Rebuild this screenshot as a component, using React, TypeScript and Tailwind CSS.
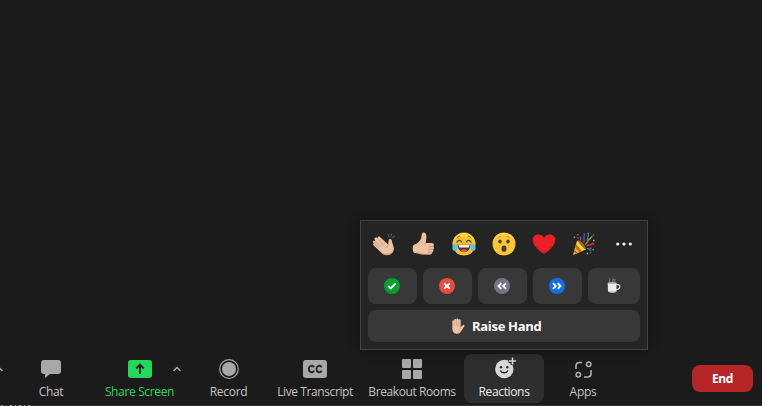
import React from "react";

const Clap = () => (
  <svg width="24" height="24" viewBox="0 0 24 24" fill="none">
    <path d="M.8 9.600C1.400 8.300 2.800 8.700 3.600 9.500L2.800 8C1.800 6.300 3.700 4.800 5.100 6.100L6 7C4.700 5.300 6.500 3.600 8 5l8.200 7.600.4-4.100c.2-1.900 2.500-2 3-.3l1.900 6.300c1 3.300.1 5.800-2.500 7.500-3 1.900-6.300 1.500-8.900-.6L1.500 13.200c-.9-.8-.4-2 .7-1.700L1.400 10.700c-.5-.4-.7-.7-.6-1.100z" fill="#edc2a0" />
    <path d="m2.200 11.500 5 4.700M3.600 9.500l5.600 5.200M6 7l5.500 6M16.200 12.600c-1 .9-1.300 2.100-1 3.400" stroke="#bf9073" strokeWidth=".7" />
    <path d="M9 20.300c3 2.800 7.300 2.700 10.300.5" stroke="#bf9073" strokeWidth=".8" />
    <path d="m15.800 2 1.300 2.900M19.500 1.700l-.5 2.600M22.500 4.300l-2.300 1.200" stroke="#4c6978" strokeWidth="1" strokeLinecap="round" />
  </svg>
);

const Thumb = () => (
  <svg width="24" height="24" viewBox="0 0 24 24" fill="none">
    <path d="M2.500 12.400c3.400-1 5.300-3.300 6.500-5.700.8-1.700.2-4.600 1.500-5.800 1.200-1 3.100-.1 3.600 1.700.6 2.300.1 4.900-.3 8.400h6c2 0 2.900 2.200 1.400 3.300 1.200.8 1 2.400-.2 3 .8 1 .5 2.300-.8 2.700.3 1.400-.5 2.400-2 2.400h-7.500c-3 0-4.700-1.300-8-1.500-2.300-.1-3-8-.2-8.500z" fill="#edc2a0" />
    <path d="M21 14.400h-4.300M20.700 17.400h-4.300M20 20.100h-3.800M13.800 11l-1 1.300M5 20.900c3 .7 4.500 1.500 7 1.500h6" stroke="#b98566" strokeWidth=".8" />
  </svg>
);

const Joy = () => (
  <svg width="24" height="24" viewBox="0 0 24 24" fill="none">
    <circle cx="12" cy="12" r="11.500" fill="#fcc32f" />
    <path d="M2 7A11.500 11.500 0 0 1 22 7C17 3.500 7 3.500 2 7z" fill="#fdd54c" />
    <path d="M5 10.300c1-2.400 3.400-2.400 4.800-.3M14.200 10c1.400-2.100 3.800-2.100 4.800.3" stroke="#504039" strokeWidth="1.300" strokeLinecap="round" />
    <path d="M5 6c.7-1.100 1.700-1.700 3-1.800M16 4.200c1.300.1 2.300.7 3 1.800" stroke="#75552b" strokeWidth="1" strokeLinecap="round" />
    <path d="M5.800 12.800h12.400c0 4.700-2.600 7.400-6.200 7.400s-6.200-2.700-6.200-7.400z" fill="#4e3439" />
    <path d="M6.700 13.100h10.600l-.5 2.400H7.200z" fill="#fff" />
    <path d="M8.500 18.600c2-1.700 5-1.700 7 0-2 2.100-5 2.100-7 0z" fill="#f15168" />
    <path d="M5.500 11.500C2 11.700.3 13.500.4 16.200c.1 3.800 4.500 3.500 5 .2z" fill="#58bff1" />
    <path d="M18.500 11.500c3.500.2 5.200 2 5.100 4.700-.1 3.800-4.500 3.500-5 .2z" fill="#58bff1" />
  </svg>
);

const Wow = () => (
  <svg width="24" height="24" viewBox="0 0 24 24" fill="none">
    <circle cx="12" cy="12" r="11.500" fill="#fcc735" />
    <path d="M2.500 6A11.500 11.500 0 0 1 21.500 6C17 2.800 7 2.800 2.500 6z" fill="#fdd54f" />
    <path d="M6 5.700c.7-.8 1.500-1.200 2.500-1.200M15.500 4.500c1 0 1.800.4 2.500 1.200" stroke="#b98d35" strokeLinecap="round" />
    <ellipse cx="8" cy="9.500" rx="1.700" ry="2" fill="#493b36" />
    <ellipse cx="16" cy="9.500" rx="1.700" ry="2" fill="#493b36" />
    <ellipse cx="12" cy="16.700" rx="2.500" ry="3.100" fill="#473a38" />
  </svg>
);

const Heart = () => (
  <svg width="24" height="24" viewBox="0 0 24 24">
    <path d="M12 21.900C7.500 19.200.8 13.600.7 7.800.5 2.500 8.800.3 12 5.800c3.200-5.500 11.500-3.300 11.300 2C23.200 13.600 16.500 19.200 12 21.900z" fill="#eb2027" />
    <path d="M1.500 11c2.300 4.500 6 7.500 10.500 9.700 4.500-2.200 8.200-5.200 10.500-9.700-1.700 4.500-6.700 8.800-10.500 10.900C8.200 19.800 3.200 15.500 1.500 11z" fill="#bd1822" />
  </svg>
);

const Party = () => (
  <svg width="24" height="24" viewBox="0 0 24 24" fill="none">
    <path d="M5 8.500 1 23l13-5.500z" fill="#f3b72e" />
    <path d="m4 12.300 5.800 7-2.500 1.100-4.200-4.800zM2.500 17.500l3.300 3.600-2 .9-1.900-2.200z" fill="#b87918" />
    <ellipse cx="9.500" cy="13" rx="2.200" ry="6" transform="rotate(-40 9.500 13)" fill="#a46c17" />
    <path d="m7.300 11.300 4.500 5.200 1.700 1.100-3.300.8-5.400-6.700.5-2.700z" fill="#ffd24a" />
    <path d="M11.500 10.500c2-2.500-.8-4.700.7-6.500.7-1.200.3-2.200-.2-3" stroke="#a92bb8" strokeWidth="1.400" />
    <path d="M13 12.300c3-.8 1.800-3.800 4-4.800 2-.5 1.600-2.800 3.500-3" stroke="#78a936" strokeWidth="1.400" />
    <path d="M15 14.200c1.700-2.500 2.800 0 4.200-1.800 1-1.300 1.600-.7 3-.4" stroke="#da3150" strokeWidth="1.400" />
    <path d="M8.800 8.500C8 7 9.500 6 8.400 4.800M15 7.800c1.500-2 .4-3.500 1.800-5.500M15 16.500c2-.6 3 1 4 2.700" stroke="#159baa" strokeWidth="1.200" />
    <path d="M5 2h1.600v1.600H5zM20.700 2.200h1.600v1.600h-1.600zM17.800 20h1.500v1.500h-1.500z" fill="#e5323a" />
    <path d="M1.700 4.500h1.500V6H1.700zM15.500.8H17v1.500h-1.500zM20.500 17H22v1.500h-1.500z" fill="#15b3c2" />
    <path d="M18 15.500h1.500V17H18zM5.300 5.300h1.400v1.400H5.300z" fill="#c02bd0" />
    <path d="M21 7.700h1.500v1.500H21zM14.700 20.700h1.500v1.500h-1.500z" fill="#97cf36" />
  </svg>
);

const More = () => (
  <svg width="24" height="24" viewBox="0 0 24 24" fill="#fff">
    <circle cx="5.800" cy="12" r="1.600" />
    <circle cx="12" cy="12" r="1.600" />
    <circle cx="18.200" cy="12" r="1.600" />
  </svg>
);

const feedback = [
  { color: "#00a12d", path: "m4.200 8 2.500 2.500 5-5" },
  { color: "#e94b3c", path: "m5.300 5.300 5.400 5.400m0-5.400-5.400 5.400" },
  { color: "#747487", path: "M7.300 5.200 4.500 8l2.800 2.800M12 5.200 9.200 8l2.800 2.800" },
  { color: "#0e71eb", path: "m4 5.200 2.800 2.800L4 10.800M8.700 5.200l2.800 2.800-2.800 2.800" },
];

const Coffee = () => (
  <svg width="16" height="16" viewBox="0 0 16 16" fill="none">
    <path d="M4 5C2 3.500 5 2.500 3.500.5M7 5c-1.500-1.500 1-2.500 0-4.500M8.500 5c-1-2 1.200-2.500.3-4" stroke="#8a8a8a" />
    <path d="M10 6.700h2.200c2.600 0 2.300 4.800-2 5" stroke="#ddd" strokeWidth="1.200" />
    <path d="M1.700 5H10.500v8.300c0 1.700-7.800 1.700-8.500 0z" fill="#eeecea" />
    <ellipse cx="6.100" cy="5" rx="4.400" ry="1" fill="#b9aaa2" />
    <path d="M2.200 12.800c1.500 1.100 6.500 1.100 8 0v.7c-.5 1.500-7.500 1.500-8 0z" fill="#bbb" />
  </svg>
);

const Hand = () => (
  <svg width="16" height="16" viewBox="0 0 16 16" fill="none">
    <path d="M2.300 10V3.300c0-1.300 1.800-1.300 1.800 0V2c0-1.500 2.200-1.500 2.200 0v-.5c0-1.500 2.200-1.500 2.200 0V2c.2-1.200 2.200-1.100 2.200.4v6.800l2-2c1.100-.9 2.400.1 1.600 1.200l-3.400 5c-1 1.700-2.400 2.300-4.300 2.300-2.800 0-4.300-2.200-4.300-5.700z" fill="#edc2a0" />
    <path d="M4.100 3.500V8M6.300 2v6M8.500 2.300V8M8.800 13c-.2-1.600.4-2.500 1.900-3" stroke="#c79678" strokeWidth=".5" />
  </svg>
);

function ReactionsMenu() {
  return (
    <div className="absolute top-[220px] left-[360px] flex h-[130px] w-[288px] flex-col border border-[#434343] bg-[#242424] px-[7px] pt-[11px] shadow-[0_1px_10px_rgba(0,0,0,0.45)]">
      <div className="flex h-6 gap-4 pl-1">
        <Clap /><Thumb /><Joy /><Wow /><Heart /><Party /><More />
      </div>
      <div className="mt-3 grid h-9 grid-cols-[49px_49px_49px_49px_52px] gap-1.5">
        {feedback.map((f) => (
          <button key={f.color} className="flex items-center justify-center rounded-lg bg-[#383838] pr-px">
            <svg width="16" height="16" viewBox="0 0 16 16" fill="none">
              <circle cx="8" cy="8" r="8" fill={f.color} />
              <path d={f.path} stroke="#fff" strokeWidth="1.900" />
            </svg>
          </button>
        ))}
        <button className="flex items-center justify-center rounded-lg bg-[#383838]"><Coffee /></button>
      </div>
      <button className="mt-1.5 flex h-8 items-center rounded-lg bg-[#383838] pl-[82px] text-[13px] font-bold text-white">
        <Hand />
        <span className="ml-1.5 pt-px tracking-[-0.3px] whitespace-nowrap">Raise Hand</span>
      </button>
    </div>
  );
}

const Chevron = () => (
  <svg width="10" height="8" viewBox="0 0 10 8" fill="none">
    <path d="m1.500 6 3.500-3.500L8.500 6" stroke="#aaa" strokeWidth="1.500" />
  </svg>
);

function Tool({ label, cell, text = "text-[#c4c4c4]", children, extra }: { label: string; cell: string; text?: string; children: React.ReactNode; extra?: React.ReactNode }) {
  return (
    <button className={`flex h-[49px] shrink-0 flex-col items-center pt-[3px] ${cell}`}>
      <span className="grid h-6 w-full grid-cols-[1fr_24px_1fr] items-center">
        <span />
        <svg width="24" height="24" viewBox="0 0 24 24" fill="none">{children}</svg>
        <span className="flex pl-5">{extra}</span>
      </span>
      <span className={`mt-[3px] text-[12px] leading-4 whitespace-nowrap ${text}`}>{label}</span>
    </button>
  );
}

export default function App() {
  return (
    <div className="relative flex h-[406px] w-[762px] flex-col overflow-hidden bg-[#1b1b1b] font-['Open_Sans','Noto_Sans',sans-serif]">
      <main className="h-[354px] shrink-0" />
      <nav className="flex h-[51px] shrink-0 items-start">
        <div className="flex w-[11px] justify-start pt-[11px]"><span className="-ml-[6px]"><Chevron /></span></div>
        <Tool label="Chat" cell="w-20 tracking-[-0.3px]">
          <path d="M5 3h14q3 0 3 3v8q0 3-3 3h-8l-5 4v-4H5q-3 0-3-3V6q0-3 3-3z" fill="#a8a8a8" />
        </Tool>
        <Tool label="Share Screen" cell="w-[97px] tracking-[-0.35px]" text="text-[#23d959]" extra={<Chevron />}>
          <rect y="3" width="24" height="18" rx="3" fill="#23d959" />
          <path d="M12 17V8M8.200 11.500 12 7.700l3.800 3.800" stroke="#1b2a1f" strokeWidth="2" />
        </Tool>
        <Tool label="Record" cell="ml-px w-[79px] tracking-[-0.3px]">
          <circle cx="12" cy="12" r="9.300" stroke="#a8a8a8" strokeWidth="1.200" />
          <circle cx="12" cy="12" r="7" fill="#a8a8a8" />
        </Tool>
        <Tool label="Live Transcript" cell="w-[94px] tracking-[-0.4px]">
          <rect y="3" width="24" height="18" rx="3" fill="#a8a8a8" />
          <path d="M11 10.200c-1.600-2.600-5.200-1.400-5.200 1.800s3.600 4.400 5.200 1.800M18.700 10.200c-1.600-2.600-5.200-1.400-5.200 1.800s3.600 4.400 5.200 1.800" stroke="#242424" strokeWidth="1.900" />
        </Tool>
        <Tool label="Breakout Rooms" cell="w-[100px] tracking-[-0.4px]">
          <rect x="2" y="2" width="9" height="9" rx="1" fill="#a8a8a8" />
          <rect x="13" y="2" width="9" height="9" rx="1" fill="#a8a8a8" />
          <rect x="2" y="13" width="9" height="9" rx="1" fill="#a8a8a8" />
          <rect x="13" y="13" width="9" height="9" rx="1" fill="#a8a8a8" />
        </Tool>
        <Tool label="Reactions" cell="ml-0.5 w-20 rounded-lg bg-[#2e2e2e] tracking-[-0.35px]" text="text-[#eeeeee]">
          <circle cx="12.300" cy="12" r="9.200" fill="#d8d8d8" />
          <path d="M20.500 0v8M16.500 4h8" stroke="#2e2e2e" strokeWidth="4" />
          <path d="M20.500.5v7M17 4h7" stroke="#d8d8d8" strokeWidth="1.500" />
          <circle cx="9" cy="10.200" r="1.200" fill="#292929" />
          <circle cx="15.300" cy="10.200" r="1.200" fill="#292929" />
          <path d="M8.300 13.500c1.700 3.100 6 3.100 7.700 0" stroke="#292929" strokeWidth="1.500" />
        </Tool>
        <Tool label="Apps" cell="w-[78px] tracking-[-0.3px]">
          <path d="M11 5.500H8.500Q5 5.500 5 9V12M20 13v3.500q0 3.500-3.500 3.500H13" stroke="#b0b0b0" strokeWidth="1.600" />
          <circle cx="17.700" cy="7.300" r="2.200" stroke="#b0b0b0" strokeWidth="1.500" />
          <circle cx="7.300" cy="17.700" r="2.200" stroke="#b0b0b0" strokeWidth="1.500" />
        </Tool>
        <button className="mt-[11px] mr-[9px] ml-auto h-[27px] w-[61px] rounded-lg bg-[#b72626] text-[12px] leading-[26px] font-bold tracking-[-0.4px] text-white">End</button>
      </nav>
      <div className="flex h-px shrink-0 gap-[3px] bg-[#323232] pl-px">
        <span className="w-0.5 bg-[#89909b]" />
        <span className="ml-1 w-0.5 bg-[#b2a69b]" />
        <span className="w-px bg-[#8c96a5]" />
        <span className="w-0.5 bg-[#a79a90]" />
        <span className="w-px bg-[#8b98a8]" />
        <span className="w-0.5 bg-[#a79c90]" />
      </div>
      <ReactionsMenu />
    </div>
  );
}
